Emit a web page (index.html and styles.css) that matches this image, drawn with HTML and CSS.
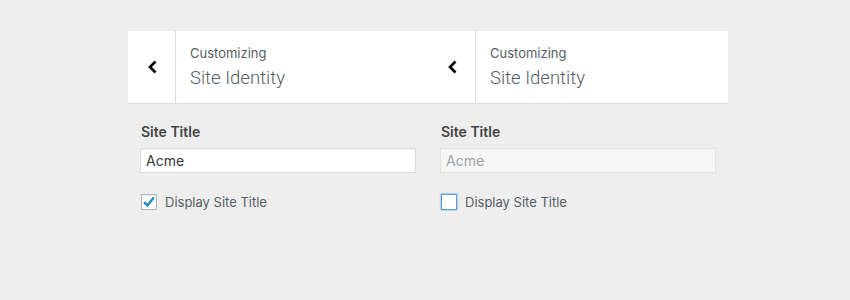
FILE: index.html
```html
<!DOCTYPE html>
<html lang="en">

<head>
    <meta name="viewport" content="width=device-width, initial-scale=1">
    <link rel="stylesheet" href="styles.css">
</head>

<body>

    <!-- Two customizer panels side by side -->
    <div class="panels">

        <!-- Panel 1: title shown -->
        <div class="panel">
            <div class="panel-header">
                <div class="back">
                    <svg width="11" height="14" viewBox="0 0 11 14">
                        <polyline points="8.5,1.5 3,7 8.5,12.5" fill="none" stroke="#000" stroke-width="2.6" />
                    </svg>
                </div>
                <div class="panel-title">
                    <span class="crumb">Customizing</span>
                    <span class="heading">Site Identity</span>
                </div>
            </div>
            <div class="section">
                <label class="field-label">Site Title</label>
                <input type="text" class="field" value="Acme">
                <div class="check-row">
                    <span class="checkbox checked">
                        <svg width="14" height="14" viewBox="0 0 14 14">
                            <polyline points="2.2,7.2 5.4,10.4 11.8,2.6" fill="none" stroke="#1e8cbe" stroke-width="2.4" />
                        </svg>
                    </span>
                    <span class="check-label">Display Site Title</span>
                </div>
            </div>
        </div>

        <!-- Panel 2: title hidden -->
        <div class="panel">
            <div class="panel-header">
                <div class="back">
                    <svg width="11" height="14" viewBox="0 0 11 14">
                        <polyline points="8.5,1.5 3,7 8.5,12.5" fill="none" stroke="#000" stroke-width="2.6" />
                    </svg>
                </div>
                <div class="panel-title">
                    <span class="crumb">Customizing</span>
                    <span class="heading">Site Identity</span>
                </div>
            </div>
            <div class="section">
                <label class="field-label">Site Title</label>
                <input type="text" class="field disabled" value="Acme" disabled>
                <div class="check-row">
                    <span class="checkbox focused"></span>
                    <span class="check-label">Display Site Title</span>
                </div>
            </div>
        </div>

    </div>

</body>

</html>
```

FILE: styles.css
```css
* {
    box-sizing: border-box;
}

body {
    margin: 0;
    background-color: #eeeeee;
    font-family: Inter, "Noto Sans", sans-serif;
    color: #555d66;
}

/* Container for the two panels */
.panels {
    display: flex;
    width: 600px;
    margin: 31px 0 0 128px;
}

.panel {
    flex: 1;
}

/* Header with back button and title */
.panel-header {
    display: flex;
    height: 73px;
    background-color: #fff;
    border-bottom: 1px solid #dddddd;
}

.back {
    width: 48px;
    border-right: 1px solid #dddddd;
    display: flex;
    align-items: center;
    justify-content: center;
    padding-left: 2px;
}

.panel-title {
    display: flex;
    flex-direction: column;
    padding: 13px 14px 0 14px;
}

.crumb {
    font-size: 13px;
    line-height: 18px;
    color: #555d66;
}

.heading {
    font-family: Roboto, Inter, sans-serif;
    font-size: 18.5px;
    font-weight: 300;
    line-height: 28px;
    margin-top: 2px;
    color: #555d66;
}

/* Section contents */
.section {
    display: flex;
    flex-direction: column;
    padding: 18px 12px 0 12px;
}

.field-label {
    font-size: 14px;
    font-weight: 600;
    line-height: 20px;
    color: #444;
    padding-left: 1px;
}

.field {
    margin-top: 6px;
    width: 100%;
    height: 25px;
    padding: 0 5px;
    border: 1px solid #dddddd;
    box-shadow: inset 0 1px 2px rgba(0, 0, 0, 0.07);
    background-color: #fff;
    font-family: Inter, "Noto Sans", sans-serif;
    font-size: 14px;
    color: #32373c;
    outline: none;
}

.field.disabled {
    background-color: #f6f6f6;
    border-color: #e2e2e2;
    box-shadow: none;
    color: #a0a5aa;
}

/* Checkbox rows */
.check-row {
    display: flex;
    align-items: center;
    gap: 8px;
    margin-top: 20px;
    padding-left: 1px;
}

.checkbox {
    width: 16px;
    height: 16px;
    border: 1px solid #b4b9be;
    background-color: #fff;
    box-shadow: inset 0 1px 2px rgba(0, 0, 0, 0.1);
    display: flex;
    align-items: center;
    justify-content: center;
}

.checkbox.focused {
    border-color: #5b9dd9;
    box-shadow: 0 0 2px rgba(30, 140, 190, 0.8);
}

.check-label {
    font-size: 13px;
    line-height: 18px;
    color: #555d66;
}
```
